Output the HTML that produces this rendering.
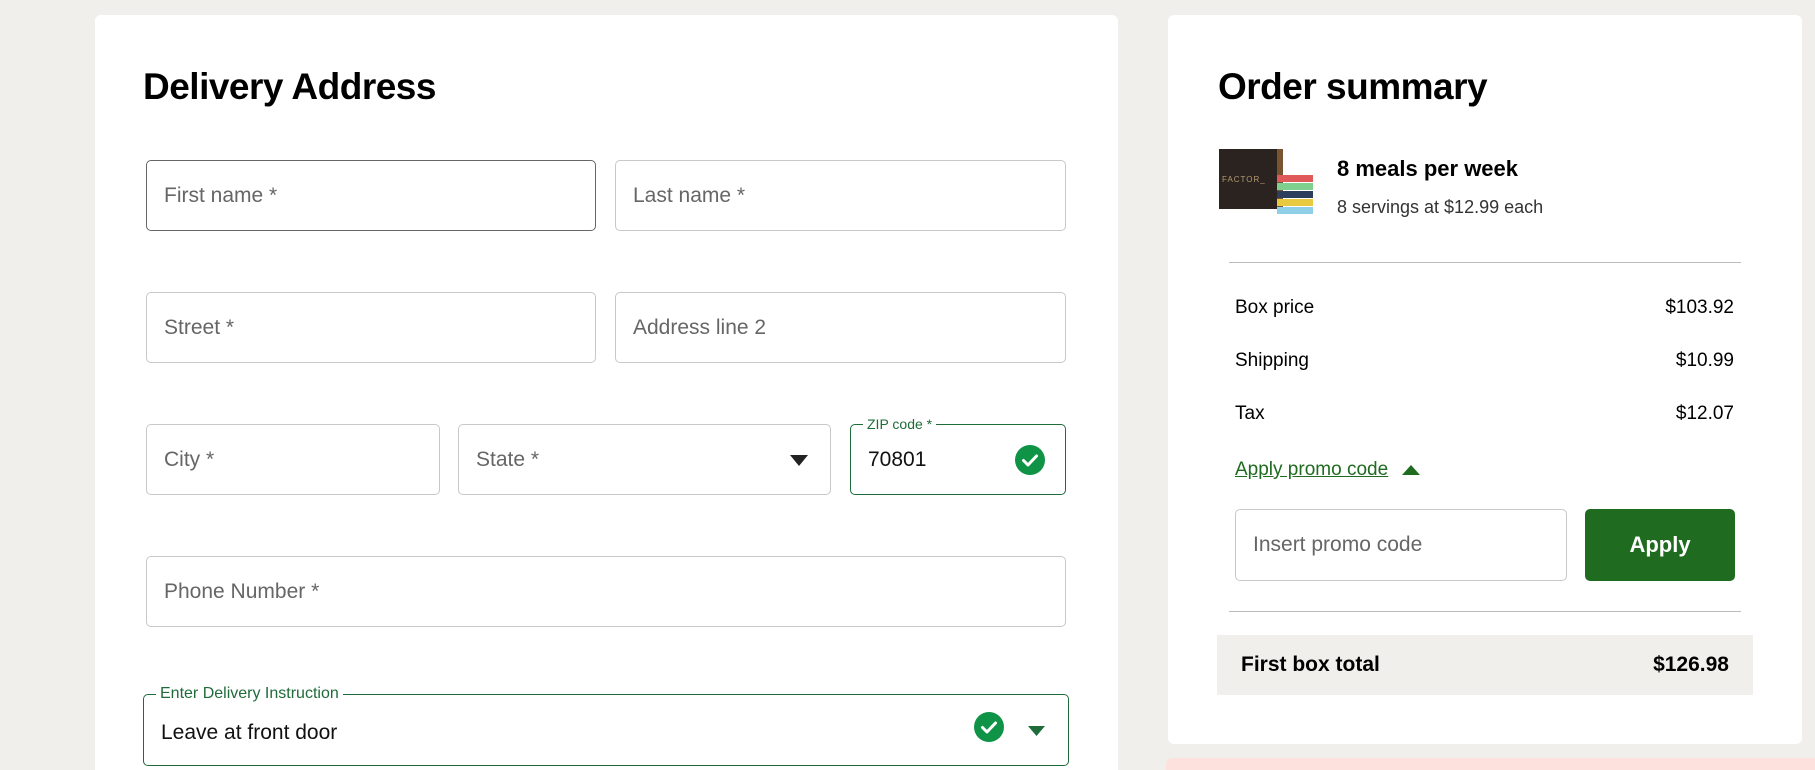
<!DOCTYPE html>
<html style="width:1815px;height:770px;overflow:hidden"><head><meta charset="utf-8"><style>
*{box-sizing:border-box;margin:0;padding:0}
body{width:1815px;height:770px;overflow:hidden;background:#f0efeb;font-family:"Liberation Sans",sans-serif;position:relative;color:#000}
.card{position:absolute;background:#fff;border-radius:6px}
.in{position:absolute;border:1px solid #c8c8c8;border-radius:5px;background:#fff;font-size:21px;color:#666;padding-left:17px;display:flex;align-items:center}
.abs{position:absolute}
.lbl{position:absolute;font-size:15px;color:#1f6b3a;background:#fff;padding:0 4px;top:-10px;left:12px;line-height:18px}
.chk{position:absolute;width:30px;height:30px;border-radius:50%;background:#0f9447}
.row{position:absolute;left:1235px;width:499px;font-size:19px;display:flex;justify-content:space-between}
</style></head><body>
<div class="card" style="left:95px;top:15px;width:1023px;height:765px"></div>
<div class="card" style="left:1168px;top:15px;width:634px;height:729px"></div>
<div class="abs" style="left:1166px;top:758px;width:660px;height:30px;background:#fde1dc;border-radius:6px"></div>

<div class="abs" style="left:143px;top:66px;font-size:37px;font-weight:bold;letter-spacing:-0.5px">Delivery Address</div>

<div class="in" style="left:146px;top:160px;width:450px;height:71px;border-color:#666">First name *</div>
<div class="in" style="left:615px;top:160px;width:451px;height:71px">Last name *</div>
<div class="in" style="left:146px;top:292px;width:450px;height:71px">Street *</div>
<div class="in" style="left:615px;top:292px;width:451px;height:71px">Address line 2</div>
<div class="in" style="left:146px;top:424px;width:294px;height:71px">City *</div>
<div class="in" style="left:458px;top:424px;width:373px;height:71px">State *
<svg class="abs" style="left:331px;top:30px" width="18" height="11"><path d="M0 0H18L9 11Z" fill="#222"/></svg></div>
<div class="in" style="left:850px;top:424px;width:216px;height:71px;border-color:#1f6b3a;color:#111">70801
<span class="lbl" style="font-size:14px">ZIP code *</span>
<div class="chk" style="left:164px;top:20px"><svg width="30" height="30"><path d="M8.5 15.5l4.5 4.5 8.5-9" stroke="#fff" stroke-width="3" fill="none" stroke-linecap="round" stroke-linejoin="round"/></svg></div></div>
<div class="in" style="left:146px;top:556px;width:920px;height:71px">Phone Number *</div>
<div class="in" style="left:143px;top:694px;width:926px;height:72px;border-color:#1f6b3a;color:#111;padding-top:6px">Leave at front door
<span class="lbl" style="font-size:16px">Enter Delivery Instruction</span>
<div class="chk" style="left:830px;top:17px"><svg width="30" height="30"><path d="M8.5 15.5l4.5 4.5 8.5-9" stroke="#fff" stroke-width="3" fill="none" stroke-linecap="round" stroke-linejoin="round"/></svg></div>
<svg class="abs" style="left:884px;top:31px" width="17" height="10"><path d="M0 0H17L8.5 10Z" fill="#1f6b3a"/></svg></div>

<div class="abs" style="left:1218px;top:66px;font-size:37px;font-weight:bold;letter-spacing:-0.5px">Order summary</div>
<svg class="abs" style="left:1219px;top:147px" width="100" height="72">
<rect x="0" y="2" width="58" height="60" fill="#2b2320"/><rect x="58" y="2" width="6" height="60" fill="#7a5330"/>
<text x="3" y="35" font-size="8" fill="#b49a72" font-family="Liberation Sans" letter-spacing="1">FACTOR_</text>
<rect x="58" y="28" width="36" height="7" fill="#e05a5a"/><rect x="58" y="36" width="36" height="7" fill="#7fcf8f"/>
<rect x="58" y="44" width="36" height="7" fill="#2c3e5c"/><rect x="58" y="52" width="36" height="7" fill="#e8c940"/><rect x="58" y="60" width="36" height="7" fill="#8fd0e8"/>
</svg>
<div class="abs" style="left:1337px;top:156px;font-size:22px;font-weight:bold">8 meals per week</div>
<div class="abs" style="left:1337px;top:197px;font-size:18px;color:#333">8 servings at $12.99 each</div>
<div class="abs" style="left:1229px;top:262px;width:512px;height:1px;background:#bbb"></div>
<div class="row" style="top:297px"><span>Box price</span><span>$103.92</span></div>
<div class="row" style="top:350px"><span>Shipping</span><span>$10.99</span></div>
<div class="row" style="top:403px"><span>Tax</span><span>$12.07</span></div>
<div class="abs" style="left:1235px;top:459px;font-size:19px;color:#1f6b1f;text-decoration:underline">Apply promo code</div>
<svg class="abs" style="left:1402px;top:465px" width="18" height="10"><path d="M0 10H18L9 0Z" fill="#1f6b1f"/></svg>
<div class="in" style="left:1235px;top:509px;width:332px;height:72px">Insert promo code</div>
<div class="abs" style="left:1585px;top:509px;width:150px;height:72px;background:#1f6b1f;border-radius:5px;color:#fff;font-size:22px;font-weight:bold;display:flex;align-items:center;justify-content:center">Apply</div>
<div class="abs" style="left:1229px;top:611px;width:512px;height:1px;background:#bbb"></div>
<div class="abs" style="left:1217px;top:635px;width:536px;height:60px;background:#f0efeb;display:flex;justify-content:space-between;align-items:center;padding:0 24px;font-size:21px;font-weight:bold"><span>First box total</span><span>$126.98</span></div>
</body></html>
